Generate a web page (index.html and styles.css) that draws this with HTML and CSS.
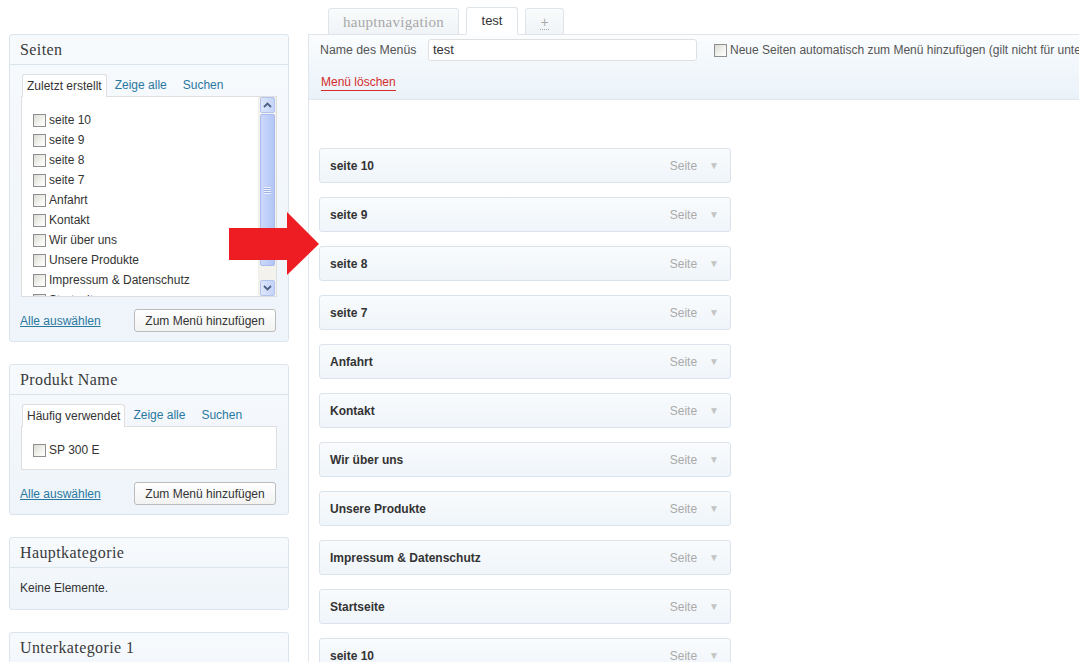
FILE: index.html
```html
<!DOCTYPE html>
<html lang="de">
<head>
<meta charset="utf-8">
<title>Menüs</title>
<link rel="stylesheet" href="styles.css">
</head>
<body>
<div class="page">
  <aside class="sidebar">
    <section class="panel">
      <h3 class="panel-h">Seiten</h3>
      <div class="panel-b">
        <div class="tabs">
          <span class="tab active">Zuletzt erstellt</span>
          <span class="tab">Zeige alle</span>
          <span class="tab">Suchen</span>
        </div>
        <div class="tabpanel tall">
          <ul class="checklist">
            <li><span class="cb"></span>seite 10</li>
            <li><span class="cb"></span>seite 9</li>
            <li><span class="cb"></span>seite 8</li>
            <li><span class="cb"></span>seite 7</li>
            <li><span class="cb"></span>Anfahrt</li>
            <li><span class="cb"></span>Kontakt</li>
            <li><span class="cb"></span>Wir über uns</li>
            <li><span class="cb"></span>Unsere Produkte</li>
            <li><span class="cb"></span>Impressum &amp; Datenschutz</li>
            <li><span class="cb"></span>Startseite</li>
          </ul>
          <div class="scrollbar">
            <div class="sb-btn"><svg width="9" height="6" viewBox="0 0 9 6"><path d="M1 5 L4.5 1.5 L8 5" fill="none" stroke="#4d6185" stroke-width="1.8"/></svg></div>
            <div class="sb-thumb"><span class="grip"></span></div>
            <div class="sb-track"></div>
            <div class="sb-btn"><svg width="9" height="6" viewBox="0 0 9 6"><path d="M1 1 L4.5 4.5 L8 1" fill="none" stroke="#4d6185" stroke-width="1.8"/></svg></div>
          </div>
        </div>
        <div class="panel-f">
          <a class="link" href="#">Alle auswählen</a>
          <button class="btn" type="button">Zum Menü hinzufügen</button>
        </div>
      </div>
    </section>

    <section class="panel">
      <h3 class="panel-h">Produkt Name</h3>
      <div class="panel-b">
        <div class="tabs">
          <span class="tab active">Häufig verwendet</span>
          <span class="tab">Zeige alle</span>
          <span class="tab">Suchen</span>
        </div>
        <div class="tabpanel short">
          <ul class="checklist">
            <li><span class="cb"></span>SP 300 E</li>
          </ul>
        </div>
        <div class="panel-f">
          <a class="link" href="#">Alle auswählen</a>
          <button class="btn" type="button">Zum Menü hinzufügen</button>
        </div>
      </div>
    </section>

    <section class="panel">
      <h3 class="panel-h">Hauptkategorie</h3>
      <div class="panel-empty">Keine Elemente.</div>
    </section>

    <section class="panel">
      <h3 class="panel-h">Unterkategorie 1</h3>
      <div class="panel-empty">Keine Elemente.</div>
    </section>
  </aside>

  <main class="main">
    <nav class="navtabs">
      <span class="navtab serif">hauptnavigation</span>
      <span class="navtab current">test</span>
      <span class="navtab plus"><span class="plus-sign">+</span></span>
    </nav>
    <div class="menuwrap">
      <div class="menuhead">
        <div class="mh-row">
          <label class="mh-label">Name des Menüs</label>
          <span class="mh-input">test</span>
          <span class="mh-auto"><span class="cb"></span>Neue Seiten automatisch zum Menü hinzufügen (gilt nicht für untergeordnete Seiten)</span>
        </div>
        <div class="mh-row2"><a class="delete" href="#">Menü löschen</a></div>
      </div>
      <div class="items">
        <div class="item"><span class="item-t">seite 10</span><span class="item-type">Seite</span><span class="item-arrow">▼</span></div>
        <div class="item"><span class="item-t">seite 9</span><span class="item-type">Seite</span><span class="item-arrow">▼</span></div>
        <div class="item"><span class="item-t">seite 8</span><span class="item-type">Seite</span><span class="item-arrow">▼</span></div>
        <div class="item"><span class="item-t">seite 7</span><span class="item-type">Seite</span><span class="item-arrow">▼</span></div>
        <div class="item"><span class="item-t">Anfahrt</span><span class="item-type">Seite</span><span class="item-arrow">▼</span></div>
        <div class="item"><span class="item-t">Kontakt</span><span class="item-type">Seite</span><span class="item-arrow">▼</span></div>
        <div class="item"><span class="item-t">Wir über uns</span><span class="item-type">Seite</span><span class="item-arrow">▼</span></div>
        <div class="item"><span class="item-t">Unsere Produkte</span><span class="item-type">Seite</span><span class="item-arrow">▼</span></div>
        <div class="item"><span class="item-t">Impressum &amp; Datenschutz</span><span class="item-type">Seite</span><span class="item-arrow">▼</span></div>
        <div class="item"><span class="item-t">Startseite</span><span class="item-type">Seite</span><span class="item-arrow">▼</span></div>
        <div class="item"><span class="item-t">seite 10</span><span class="item-type">Seite</span><span class="item-arrow">▼</span></div>
      </div>
    </div>
  </main>

  <svg class="red-arrow" width="90" height="64" viewBox="0 0 90 64">
    <polygon points="0,16 58,16 58,0 90,32 58,63 58,48 0,48" fill="#ee1d24"/>
  </svg>
</div>
</body>
</html>
```

FILE: styles.css
```css
* { box-sizing: border-box; }

html, body {
  margin: 0;
  padding: 0;
  background: #ffffff;
}

body {
  font-family: "Liberation Sans", Arial, sans-serif;
  font-size: 12px;
  color: #333333;
  width: 1079px;
  height: 662px;
  overflow: hidden;
}

.page {
  display: flex;
  height: 662px;
  overflow: hidden;
  position: relative;
}

/* ---------- sidebar ---------- */
.sidebar {
  flex: none;
  width: 280px;
  margin-left: 9px;
  padding-top: 34px;
  display: flex;
  flex-direction: column;
  gap: 22px;
}

.panel {
  flex: none;
  border: 1px solid #dbe5ee;
  border-radius: 3px;
  background: linear-gradient(to bottom, #f7fafd 0%, #eef4fa 100%);
}

.panel-h {
  margin: 0;
  height: 30px;
  line-height: 29px;
  padding-left: 10px;
  border-bottom: 1px solid #dbe5ee;
  font-family: "Liberation Serif", "Times New Roman", serif;
  font-weight: normal;
  font-size: 16px;
  letter-spacing: 0.4px;
  color: #3a3a3a;
}

.panel-b {
  padding: 9px 11px 9px 11px;
}

.tabs {
  display: flex;
  height: 22px;
  padding-left: 1px;
}

.tab {
  display: block;
  height: 22px;
  line-height: 22px;
  padding: 0 8px;
  color: #2a78a0;
  white-space: nowrap;
}

.tab.active {
  position: relative;
  z-index: 1;
  height: 23px;
  padding: 0 4px;
  color: #333333;
  background: #ffffff;
  border: 1px solid #dfdfdf;
  border-bottom: none;
  border-radius: 3px 3px 0 0;
}

.tabpanel {
  display: flex;
  background: #ffffff;
  border: 1px solid #dfdfdf;
  overflow: hidden;
}

.tabpanel.tall { height: 201px; }
.tabpanel.short { height: 44px; }

.checklist {
  list-style: none;
  margin: 0;
  padding: 13px 0 0 11px;
  flex: 1;
  min-width: 0;
}

.checklist li {
  display: flex;
  align-items: center;
  height: 20px;
  white-space: nowrap;
  color: #333333;
}

.cb {
  display: inline-block;
  flex: none;
  width: 13px;
  height: 13px;
  margin-right: 3px;
  border: 1px solid #8f8f8f;
  background: linear-gradient(135deg, #dcdcd6 0%, #f4f4f0 60%, #ffffff 100%);
}

/* scrollbar */
.scrollbar {
  flex: none;
  width: 18px;
  display: flex;
  flex-direction: column;
  background: #f3f2ec;
  border-left: 1px solid #eeeeea;
}

.sb-btn {
  height: 16px;
  margin: 0 1px;
  border: 1px solid #b3c3ee;
  border-radius: 2px;
  background: linear-gradient(to right, #dde6fb, #c4d3f8);
  display: flex;
  align-items: center;
  justify-content: center;
}

.sb-thumb {
  height: 152px;
  margin: 1px 1px 0 1px;
  border: 1px solid #a8bcf0;
  border-radius: 2px;
  background: linear-gradient(to right, #cdd9fa, #bccdf8 60%, #b3c6f5);
  display: flex;
  align-items: center;
  justify-content: center;
}

.grip {
  width: 7px;
  height: 7px;
  background: repeating-linear-gradient(to bottom, #eef2fd 0 1px, #9fb2e6 1px 2px);
}

.sb-track {
  flex: 1;
}

.panel-f {
  display: flex;
  align-items: center;
  justify-content: space-between;
  margin-top: 12px;
}

.link {
  color: #2a78a0;
  text-decoration: underline;
  margin-left: -1px;
}

.btn {
  width: 142px;
  height: 23px;
  margin-right: 1px;
  padding: 0;
  font-family: "Liberation Sans", Arial, sans-serif;
  font-size: 12px;
  color: #333333;
  background: linear-gradient(to bottom, #ffffff 0%, #f2f2f2 100%);
  border: 1px solid #bbbbbb;
  border-radius: 3px;
}

.panel-empty {
  height: 41px;
  line-height: 41px;
  padding-left: 10px;
  color: #333333;
}

/* ---------- main ---------- */
.main {
  flex: 1;
  min-width: 0;
  margin-left: 19px;
  display: flex;
  flex-direction: column;
}

.navtabs {
  flex: none;
  height: 34px;
  padding-left: 20px;
  display: flex;
  align-items: flex-end;
  gap: 7px;
}

.navtab {
  position: relative;
  height: 27px;
  line-height: 26px;
  margin-bottom: -1px;
  border: 1px solid #dde4ea;
  border-bottom-color: #dde4ea;
  border-radius: 3px 3px 0 0;
  background: linear-gradient(to bottom, #f9fbfc 0%, #f0f4f7 100%);
  text-align: center;
}

.navtab.serif {
  width: 131px;
  font-family: "Liberation Serif", "Times New Roman", serif;
  font-size: 15px;
  letter-spacing: 0.3px;
  color: #a8a8a8;
}

.navtab.current {
  width: 52px;
  height: 28px;
  z-index: 2;
  background: #ffffff;
  border-bottom-color: #ffffff;
  font-size: 13px;
  color: #333333;
}

.navtab.plus {
  width: 39px;
  color: #aaaaaa;
  font-size: 14px;
}

.plus-sign {
  border-bottom: 1px dotted #aaaaaa;
  line-height: 14px;
  display: inline-block;
}

.menuwrap {
  flex: 1;
  border-left: 1px solid #dfe6ee;
  min-height: 0;
}

.menuhead {
  height: 66px;
  border-top: 1px solid #dfe6ee;
  border-bottom: 1px solid #dfe6ee;
  background: linear-gradient(to bottom, #fbfdfe 0%, #f3f8fc 40%, #eaf2f9 100%);
  overflow: hidden;
}

.mh-row {
  display: flex;
  align-items: center;
  height: 22px;
  margin-top: 4px;
  padding-left: 11px;
  white-space: nowrap;
}

.mh-label {
  width: 108px;
  flex: none;
  color: #555555;
  font-size: 12.3px;
}

.mh-input {
  flex: none;
  width: 269px;
  height: 22px;
  line-height: 20px;
  padding-left: 4px;
  background: #ffffff;
  border: 1px solid #dfdfdf;
  border-radius: 3px;
  font-size: 13px;
  color: #333333;
}

.mh-auto {
  display: flex;
  align-items: center;
  margin-left: 17px;
  color: #555555;
  white-space: nowrap;
}

.mh-auto .cb {
  margin-right: 3px;
}

.mh-row2 {
  margin-top: 14px;
  padding-left: 12px;
}

.delete {
  display: inline-block;
  color: #d52b2b;
  text-decoration: none;
  padding-bottom: 1px;
  border-bottom: 1px solid #d52b2b;
  line-height: 13px;
}

.items {
  padding: 48px 0 0 10px;
  display: flex;
  flex-direction: column;
  gap: 14px;
}

.item {
  flex: none;
  width: 412px;
  height: 35px;
  display: flex;
  align-items: center;
  padding: 0 11px 0 10px;
  border: 1px solid #dbe4ed;
  border-radius: 3px;
  background: linear-gradient(to bottom, #f9fbfd 0%, #eff5fa 100%);
}

.item-t {
  flex: 1;
  font-weight: bold;
  color: #333333;
}

.item-type {
  color: #aaaaaa;
}

.item-arrow {
  margin-left: 12px;
  font-size: 10px;
  color: #c4c4c4;
}

.red-arrow {
  position: absolute;
  left: 229px;
  top: 212px;
}
```
